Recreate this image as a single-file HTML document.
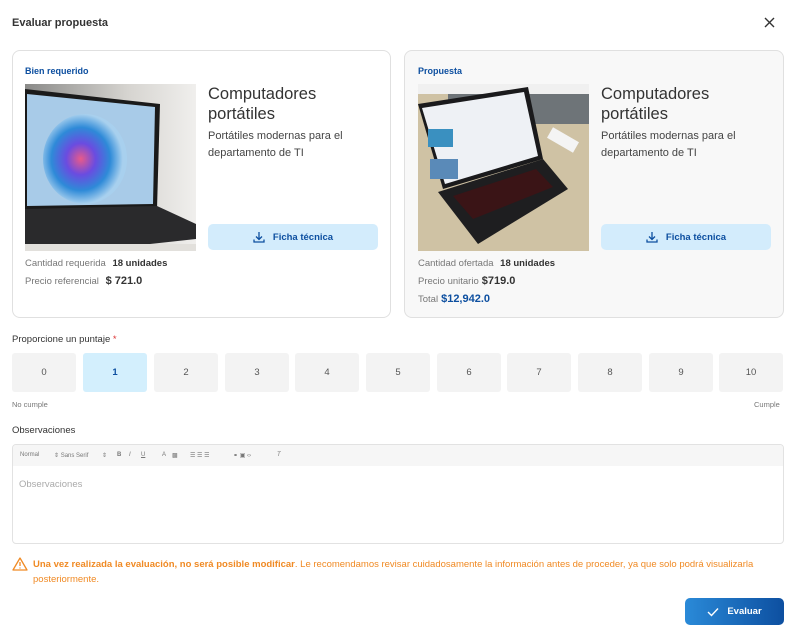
<!DOCTYPE html>
<html><head><meta charset="utf-8"><style>
*{box-sizing:border-box;margin:0;padding:0}
body{width:791px;height:632px;background:#fff;font-family:"Liberation Sans",sans-serif;color:#333;position:relative;overflow:hidden}
.a{position:absolute}
.card{position:absolute;top:50px;height:268px;border:1px solid #e0e0e0;border-radius:8px}
.lbl{font-size:9px;font-weight:bold;color:#0d4fa0}
.t{font-size:16.5px;color:#333;line-height:20px}
.d{font-size:11px;color:#444;line-height:17px}
.btn{position:absolute;width:170px;height:26px;background:#d3ecfc;border-radius:5px;font-size:9.5px;font-weight:bold;color:#0d4fa0;display:flex;align-items:center;justify-content:center;gap:8px}
.g{font-size:9.5px;color:#777}
.g b{color:#333;margin-left:4px}
.box{position:absolute;top:353px;width:64px;height:39px;background:#f3f3f3;border-radius:3px;font-size:9.5px;color:#555;display:flex;align-items:center;justify-content:center}
.tb{font-size:6px;color:#777}
</style></head><body>
<div class="a" style="left:12px;top:17px;font-size:11px;font-weight:bold;color:#333">Evaluar propuesta</div>
<svg class="a" style="left:764px;top:17px" width="11" height="11"><path d="M1 1L10 10M10 1L1 10" stroke="#333" stroke-width="1.4"/></svg>

<div class="card" style="left:12px;width:379px;background:#fff">
<div class="a lbl" style="left:12px;top:15px">Bien requerido</div>
<svg class="a" style="left:12px;top:33px" width="171" height="167">
<defs><linearGradient id="bg1" x1="0" x2="1"><stop offset="0" stop-color="#8a8a88"/><stop offset="0.6" stop-color="#d6d4d0"/><stop offset="1" stop-color="#f0efed"/></linearGradient>
<radialGradient id="fl" cx="0.45" cy="0.5"><stop offset="0" stop-color="#e85a8a"/><stop offset="0.35" stop-color="#6a4ce0"/><stop offset="0.7" stop-color="#2e8ad8"/><stop offset="1" stop-color="#a8d0ee"/></radialGradient></defs>
<rect width="171" height="167" fill="url(#bg1)"/>
<polygon points="0,5 135,20 132,125 0,125" fill="#1a1a1a"/>
<polygon points="2,10 130,23 128,120 2,122" fill="#a8cbe8"/>
<ellipse cx="60" cy="75" rx="42" ry="45" fill="url(#fl)"/>
<polygon points="0,125 132,122 171,140 171,155 60,167 0,167" fill="#2a2a2c"/>
<rect x="0" y="160" width="171" height="7" fill="#e2e0dc"/>
</svg>
<div class="a t" style="left:195px;top:33px">Computadores<br>portátiles</div>
<div class="a d" style="left:195px;top:77px">Portátiles modernas para el<br>departamento de TI</div>
<div class="btn" style="left:195px;top:173px"><svg width="12" height="12" viewBox="0 0 12 12"><path d="M6 1V8M3 5.5L6 8.5L9 5.5M1 8.5V11H11V8.5" stroke="#0d4fa0" stroke-width="1.3" fill="none"/></svg>Ficha técnica</div>
<div class="a g" style="left:12px;top:207px">Cantidad requerida <b>18 unidades</b></div>
<div class="a g" style="left:12px;top:224px">Precio referencial <b style="font-size:11px">$ 721.0</b></div>
</div>

<div class="card" style="left:404px;width:380px;background:#f8f8f8">
<div class="a lbl" style="left:13px;top:15px">Propuesta</div>
<svg class="a" style="left:13px;top:33px" width="171" height="167">
<rect width="171" height="167" fill="#cfc2a4"/>
<rect x="30" y="0" width="141" height="40" fill="#6e7478"/>
<rect x="0" y="0" width="171" height="10" fill="#f0f0f0"/>
<polygon points="0,20 110,3 125,75 25,105" fill="#1a1a1c"/>
<polygon points="4,24 106,8 120,72 27,100" fill="#eef1f5"/>
<rect x="10" y="45" width="25" height="18" fill="#3a90c0"/><rect x="12" y="75" width="28" height="20" fill="#5a8ab8"/>
<polygon points="20,108 125,75 150,105 60,160" fill="#1e1e20"/>
<polygon points="35,112 118,85 135,103 55,135" fill="#3a1416"/>
<rect x="130" y="50" width="30" height="12" fill="#f4f4f4" transform="rotate(30 145 56)"/>
</svg>
<div class="a t" style="left:196px;top:33px">Computadores<br>portátiles</div>
<div class="a d" style="left:196px;top:77px">Portátiles modernas para el<br>departamento de TI</div>
<div class="btn" style="left:196px;top:173px"><svg width="12" height="12" viewBox="0 0 12 12"><path d="M6 1V8M3 5.5L6 8.5L9 5.5M1 8.5V11H11V8.5" stroke="#0d4fa0" stroke-width="1.3" fill="none"/></svg>Ficha técnica</div>
<div class="a g" style="left:13px;top:207px">Cantidad ofertada <b>18 unidades</b></div>
<div class="a g" style="left:13px;top:224px">Precio unitario<b style="font-size:11px;margin-left:3px">$719.0</b></div>
<div class="a g" style="left:13px;top:242px">Total<b style="font-size:11px;color:#0d4fa0;margin-left:3px">$12,942.0</b></div>
</div>

<div class="a" style="left:12px;top:334px;font-size:9.5px;color:#333">Proporcione un puntaje <span style="color:#d33">*</span></div>
<div class="box" style="left:12px">0</div>
<div class="box" style="left:83px;background:#d3effd;color:#0d4fa0;font-weight:bold">1</div>
<div class="box" style="left:154px">2</div>
<div class="box" style="left:225px">3</div>
<div class="box" style="left:295px">4</div>
<div class="box" style="left:366px">5</div>
<div class="box" style="left:437px">6</div>
<div class="box" style="left:507px">7</div>
<div class="box" style="left:578px">8</div>
<div class="box" style="left:649px">9</div>
<div class="box" style="left:719px">10</div>
<div class="a" style="left:12px;top:400px;font-size:7.5px;color:#777">No cumple</div>
<div class="a" style="left:754px;top:400px;font-size:7.5px;color:#777">Cumple</div>

<div class="a" style="left:12px;top:425px;font-size:9.5px;color:#333">Observaciones</div>
<div class="a" style="left:12px;top:444px;width:772px;height:100px;border:1px solid #e2e2e2;border-radius:4px;overflow:hidden">
<div style="height:21px;background:#f6f6f6;position:relative">
<span class="a tb" style="left:7px;top:7px">Normal</span><span class="a tb" style="left:41px;top:7px">⇕ Sans Serif</span><span class="a tb" style="left:89px;top:7px">⇕</span>
<span class="a tb" style="left:104px;top:7px;font-weight:bold">B</span><span class="a tb" style="left:116px;top:7px;font-style:italic">I</span><span class="a tb" style="left:128px;top:7px;text-decoration:underline">U</span>
<span class="a tb" style="left:149px;top:7px">A</span><span class="a tb" style="left:159px;top:7px">▩</span>
<span class="a tb" style="left:177px;top:7px">☰ ☰ ☰</span><span class="a tb" style="left:220px;top:7px">⚭ ▣ ‹›</span><span class="a tb" style="left:264px;top:7px;font-style:italic">T</span>
</div>
<div class="a" style="left:6px;top:34px;font-size:9.5px;color:#aaa">Observaciones</div>
</div>

<svg class="a" style="left:12px;top:557px" width="16" height="14" viewBox="0 0 16 14"><path d="M8 1L15 13H1Z" stroke="#f08a24" stroke-width="1.3" fill="none" stroke-linejoin="round"/><path d="M8 5V9M8 10.5V11.5" stroke="#f08a24" stroke-width="1.3"/></svg>
<div class="a" style="left:33px;top:558px;width:745px;font-size:9.5px;line-height:14.5px;color:#f08a24"><b>Una vez realizada la evaluación, no será posible modificar</b>. Le recomendamos revisar cuidadosamente la información antes de proceder, ya que solo podrá visualizarla posteriormente.</div>

<div class="a" style="left:685px;top:598px;width:99px;height:27px;border-radius:5px;background:linear-gradient(90deg,#2a8ad8,#0d4fa0);color:#fff;font-size:9.5px;font-weight:bold;display:flex;align-items:center;justify-content:center;gap:8px"><svg width="12" height="10"><path d="M1 5L4.5 8.5L11 1.5" stroke="#fff" stroke-width="1.4" fill="none"/></svg>Evaluar</div>
</body></html>
